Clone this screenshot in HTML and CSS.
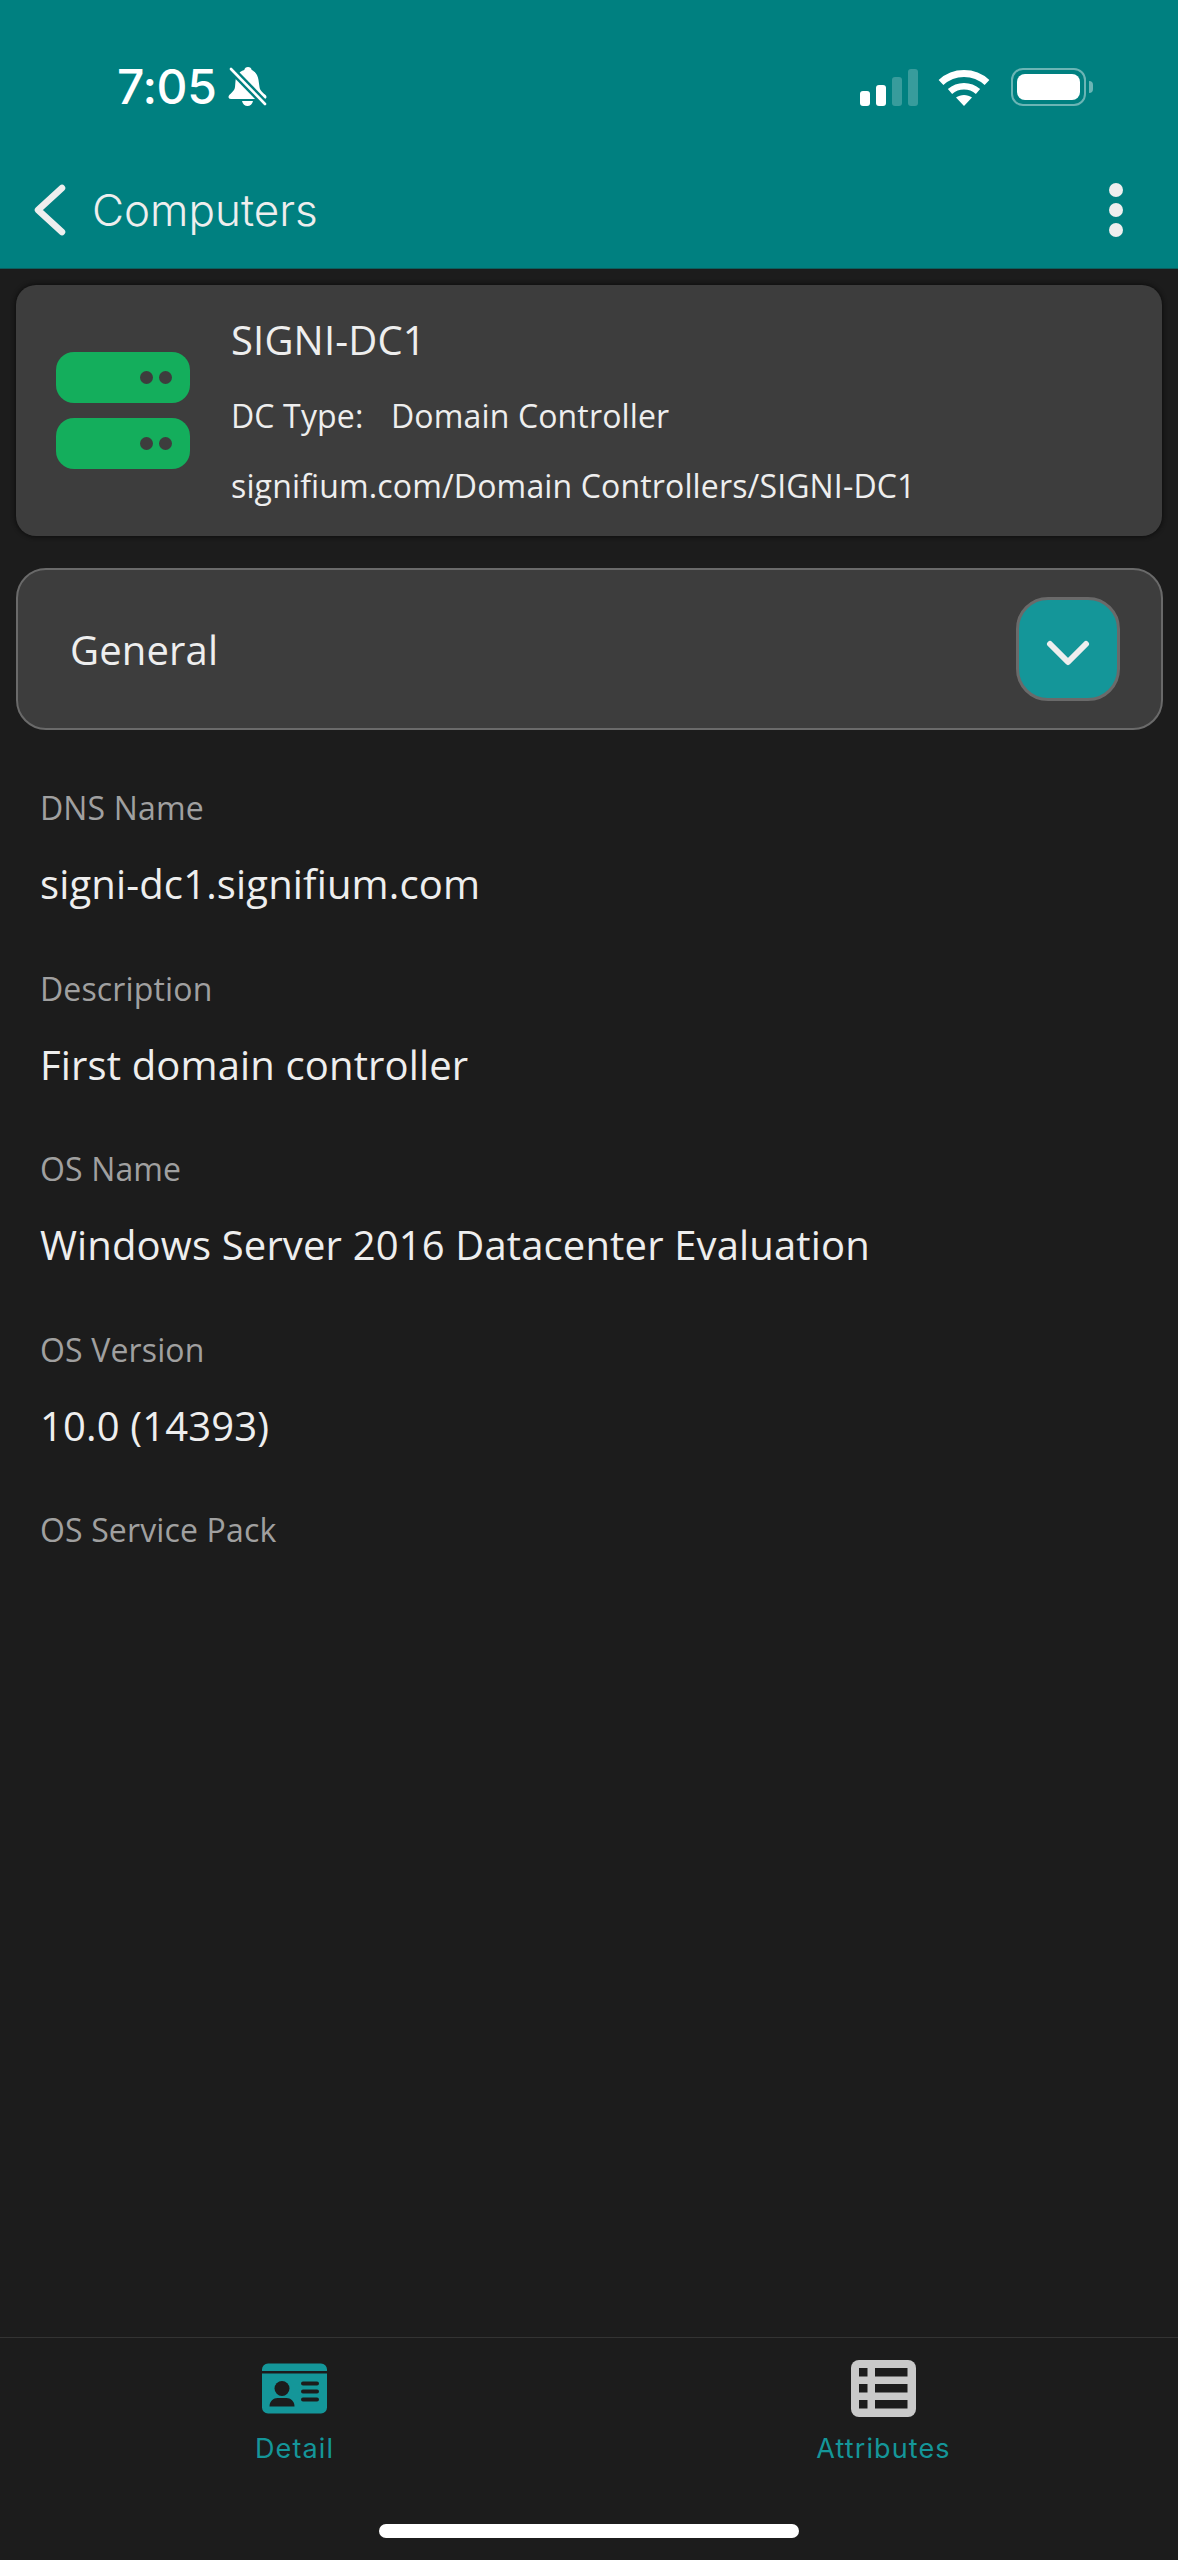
FILE: index.html
```html
<!DOCTYPE html>
<html lang="en">
<head>
<meta charset="utf-8">
<title>SIGNI-DC1</title>
<link rel="stylesheet" href="styles.css">
</head>
<body>
<div class="app">
  <header class="header">
    <div class="status">
      <div class="status-left">
        <span class="time">7:05</span>
        <svg class="bell" viewBox="0 0 39 40" width="39" height="40">
          <path fill="#fff" d="M20 0c-2 0-3.400 1.200-3.700 3C10.500 4.500 8 9.500 7.500 14L7 20c-.5 4-4 6-6 8.500C0 30 .5 32 3 32h33c2.500 0 3-2 2-3.500-2.500-2.500-6-4.500-6.500-8.500l-1-7c-.5-5-3.500-8.500-6.800-10-.3-1.800-1.700-3-3.700-3zM14 34c.5 3 3 5 5.500 5s5-2 5.500-5z"/>
          <path stroke="#008080" stroke-width="7.500" fill="none" d="M0 -1l39 40"/>
          <path stroke="#fff" stroke-width="2.600" stroke-linecap="round" fill="none" d="M3 2l34 35"/>
        </svg>
      </div>
      <div class="status-right">
        <div class="signal">
          <span class="bar bar-1"></span>
          <span class="bar bar-2"></span>
          <span class="bar bar-3"></span>
          <span class="bar bar-4"></span>
        </div>
        <svg class="wifi" viewBox="0 0 52 38" width="52" height="38">
          <path fill="none" stroke="#fff" stroke-width="7" d="M3 14.500C16 2.500 36 2.500 49 14.500"/>
          <path fill="none" stroke="#fff" stroke-width="6.500" d="M12 23.500c8-7 20-7 28 0"/>
          <path fill="#fff" d="M18 29.500c4.500-3.500 11.500-3.500 16 0L26 38z"/>
        </svg>
        <div class="battery">
          <div class="battery-body"><span class="battery-fill"></span></div>
          <span class="battery-nub"></span>
        </div>
      </div>
    </div>
    <nav class="nav">
      <div class="nav-left">
        <svg class="back" viewBox="0 0 32 52" width="32" height="52">
          <path fill="none" stroke="#eee" stroke-width="6.500" stroke-linecap="round" stroke-linejoin="round" d="M28 4L4 26l24 22"/>
        </svg>
        <span class="nav-title">Computers</span>
      </div>
      <div class="more"><span></span><span></span><span></span></div>
    </nav>
  </header>

  <main class="main">
    <section class="card">
      <div class="server">
        <div class="server-unit"><span class="led"></span><span class="led"></span></div>
        <div class="server-unit"><span class="led"></span><span class="led"></span></div>
      </div>
      <div class="card-text">
        <div class="card-title">SIGNI-DC1</div>
        <div class="card-row"><span class="card-key">DC Type:</span><span>Domain Controller</span></div>
        <div class="card-row">signifium.com/Domain Controllers/SIGNI-DC1</div>
      </div>
    </section>

    <section class="accordion">
      <span class="accordion-title">General</span>
      <button class="accordion-btn" type="button">
        <svg viewBox="0 0 44 28" width="44" height="28">
          <path fill="none" stroke="#eee" stroke-width="6" stroke-linecap="round" stroke-linejoin="round" d="M4 5l18 18L40 5"/>
        </svg>
      </button>
    </section>

    <dl class="fields">
      <div class="field"><dt>DNS Name</dt><dd>signi-dc1.signifium.com</dd></div>
      <div class="field"><dt>Description</dt><dd>First domain controller</dd></div>
      <div class="field"><dt>OS Name</dt><dd>Windows Server 2016 Datacenter Evaluation</dd></div>
      <div class="field"><dt>OS Version</dt><dd>10.0 (14393)</dd></div>
      <div class="field"><dt>OS Service Pack</dt><dd></dd></div>
    </dl>
  </main>

  <footer class="tabbar">
    <div class="tabs">
      <div class="tab">
        <svg class="tab-icon" viewBox="0 0 65 50" width="65" height="50">
          <path fill="#149699" fill-rule="evenodd" d="M0 6a6 6 0 0 1 6-6h53a6 6 0 0 1 6 6v1.500H0zM0 10h65v34a6 6 0 0 1-6 6H6a6 6 0 0 1-6-6z"/>
          <circle cx="20" cy="25" r="7.500" fill="#1c1c1c"/>
          <path fill="#1c1c1c" d="M7.500 43c0-5.500 4-8.500 8-8.500h9c4 0 8 3 8 8.500z"/>
          <rect x="39" y="18" width="18" height="4" rx="2" fill="#1c1c1c"/>
          <rect x="39" y="26" width="18" height="4" rx="2" fill="#1c1c1c"/>
          <rect x="39" y="34" width="18" height="4" rx="2" fill="#1c1c1c"/>
        </svg>
        <span class="tab-label">Detail</span>
      </div>
      <div class="tab">
        <svg class="tab-icon" viewBox="0 0 65 57" width="65" height="57">
          <rect width="65" height="57" rx="8" fill="#c9c9c9"/>
          <g fill="#1c1c1c">
            <rect x="8" y="8" width="8.500" height="8.500"/>
            <rect x="24" y="8" width="32.500" height="8.500"/>
            <rect x="8" y="24" width="8.500" height="8.500"/>
            <rect x="24" y="24" width="32.500" height="8.500"/>
            <rect x="8" y="40" width="8.500" height="8.500"/>
            <rect x="24" y="40" width="32.500" height="8.500"/>
          </g>
        </svg>
        <span class="tab-label">Attributes</span>
      </div>
    </div>
    <div class="home"></div>
  </footer>
</div>
</body>
</html>
```

FILE: styles.css
```css
* { box-sizing: border-box; }
html, body { margin: 0; padding: 0; background: #1c1c1c; }
.app {
  width: 1178px;
  height: 2560px;
  display: flex;
  flex-direction: column;
  font-family: "Open Sans", "Noto Sans", sans-serif;
  font-weight: 380;
  letter-spacing: .009em;
  color: #eee;
  overflow: hidden;
}

/* header */
.header {
  height: 269px;
  background: #008080;
  border-bottom: 1px solid #0b5e5e;
  padding-top: 67px;
  display: flex;
  flex-direction: column;
}
.status {
  height: 40px;
  display: flex;
  justify-content: space-between;
  align-items: center;
  padding: 0 85px 0 117px;
}
.status-left { display: flex; align-items: center; gap: 12px; }
.time {
  font-family: Inter, sans-serif;
  font-weight: 500;
  font-size: 48px;
  line-height: 40px;
  letter-spacing: -.4px;
  color: #fff;
}
.status-right { display: flex; align-items: center; }
.signal { display: flex; align-items: flex-end; gap: 6px; height: 38px; }
.bar { width: 10px; border-radius: 3px; background: #fff; }
.bar-1 { height: 15px; }
.bar-2 { height: 21px; }
.bar-3, .bar-4 { background: rgba(255, 255, 255, .22); }
.bar-3 { height: 29px; }
.bar-4 { height: 37px; }
.wifi { margin-left: 20px; }
.battery { display: flex; align-items: center; margin-left: 21px; gap: 3px; }
.battery-body {
  width: 75px;
  height: 38px;
  padding: 4px;
  border: 2px solid rgba(255, 255, 255, .42);
  border-radius: 12px;
}
.battery-fill { display: block; height: 100%; background: #fff; border-radius: 8px; }
.battery-nub {
  width: 4px;
  height: 12px;
  background: rgba(255, 255, 255, .42);
  border-radius: 0 6px 6px 0;
}
.nav {
  margin-top: 73px;
  height: 60px;
  display: flex;
  justify-content: space-between;
  align-items: center;
  padding: 0 55px 0 34px;
}
.nav-left { display: flex; align-items: center; gap: 26px; }
.nav-title {
  font-family: Inter, sans-serif;
  font-weight: 300;
  font-size: 44px;
  line-height: 60px;
  letter-spacing: 0;
  color: #eee;
}
.more { display: flex; flex-direction: column; gap: 6px; }
.more span { width: 14px; height: 14px; border-radius: 50%; background: #eee; }

/* main */
.main { flex: 1; padding: 16px 16px 0; }
.card {
  height: 251px;
  background: #3d3d3d;
  border-radius: 20px;
  box-shadow: 0 0 4px 1px #0e0e0e;
  display: flex;
  align-items: center;
  padding-left: 40px;
}
.server { width: 134px; display: flex; flex-direction: column; gap: 15px; }
.server-unit {
  height: 51px;
  border-radius: 18px;
  background: #14ae5c;
  display: flex;
  justify-content: flex-end;
  align-items: center;
  gap: 6px;
  padding-right: 18px;
}
.led { width: 13px; height: 13px; border-radius: 50%; background: #3d3d3d; }
.card-text { margin-left: 41px; align-self: flex-start; padding-top: 30px; }
.card-title { font-size: 40px; line-height: 50px; color: #eee; }
.card-row { font-size: 32px; line-height: 42px; margin-top: 28px; color: #eee; white-space: nowrap; }
.card-title + .card-row { margin-top: 30px; }
.card-key { display: inline-block; width: 160px; }

.accordion {
  margin: 32px -1px 0 0;
  height: 162px;
  background: #3d3d3d;
  border: 2px solid #6a6a6a;
  border-radius: 30px;
  display: flex;
  justify-content: space-between;
  align-items: center;
  padding: 0 41px 0 52px;
}
.accordion-title { font-size: 40px; color: #eee; }
.accordion-btn {
  width: 104px;
  height: 104px;
  padding: 8px 0 0;
  background: #149699;
  border: 3px solid #6a6a6a;
  border-radius: 32px;
  display: flex;
  align-items: center;
  justify-content: center;
}

/* fields */
.fields { margin: 57px 0 0; padding: 0 24px; }
.field { height: 180.500px; }
.field dt { font-size: 32px; line-height: 42px; color: #a0a0a0; }
.field dd { margin: 28px 0 0; font-size: 40px; line-height: 54px; color: #eee; }

/* tab bar */
.tabbar { height: 223px; border-top: 1px solid #333; display: flex; flex-direction: column; }
.tabs { display: grid; grid-template-columns: 1fr 1fr; flex: none; height: 186px; }
.tab { display: flex; flex-direction: column; align-items: center; padding-top: 22px; }
.tab-icon { display: block; height: 57px; }
.tab-label {
  margin-top: 16px;
  font-family: Inter, sans-serif;
  font-size: 27px;
  font-weight: 400;
  line-height: 32px;
  letter-spacing: 1.1px;
  color: #149699;
}
.home { width: 420px; height: 14px; border-radius: 7px; background: #fff; margin: 0 auto; }
```
